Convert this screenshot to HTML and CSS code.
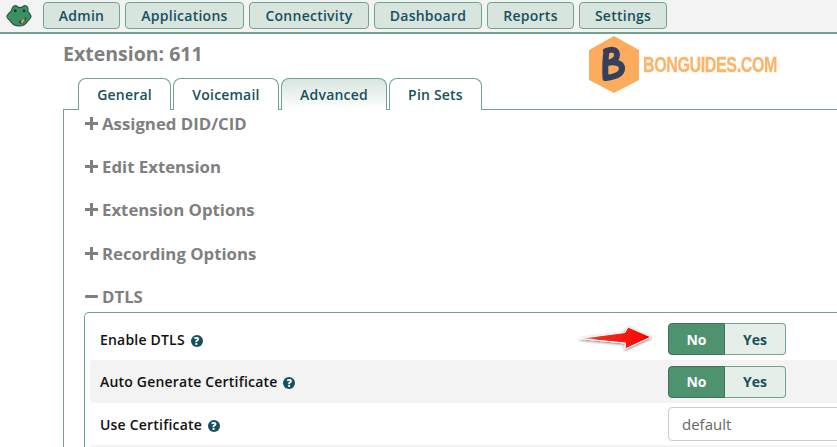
FILE: index.html
```html
<!DOCTYPE html>
<html lang="en">
<head>
<meta charset="utf-8">
<title>Extension: 611</title>
<link rel="stylesheet" href="styles.css">
</head>
<body>
<nav class="navbar">
  <svg class="frog" width="26" height="22" viewBox="0 1 28 21" preserveAspectRatio="none">
    <path d="M8 2.500c2-1.500 4.500-.8 5.500 1 1.300-.4 2.300-.4 3.500 0 1-1.800 3.500-2.500 5.500-1 1.300 1 1.500 3 .8 4.500 1.500 1.200 3 2.800 3.700 4.800-.6 2.200-2.300 3.700-4 5-2 2.700-5.500 4.200-8.800 4.200-3.700 0-7.300-1.600-9.200-4.400C3.200 15.400 1.500 14 .9 11.800 1.600 9.800 3.500 8.200 5.500 7 6.300 5.300 6.500 3.600 8 2.500z" fill="#3d9064" stroke="#1d5a50" stroke-width="1.200"/>
    <circle cx="10" cy="6.500" r="1.500" fill="#123c3c"/><circle cx="19.500" cy="6.500" r="1.500" fill="#123c3c"/>
    <path d="M14 16c3 .5 6-1 8-4-.2 4-3 7-6 7-1.200 0-1.800-1.500-2-3z" fill="#173f3f"/>
    <path d="M15.500 17l4-3 .8 1.500-3 3.500z" fill="#e6a23c"/>
  </svg>
  <a class="nav-btn nav-admin">Admin</a>
  <a class="nav-btn nav-apps">Applications</a>
  <a class="nav-btn nav-conn">Connectivity</a>
  <a class="nav-btn nav-dash">Dashboard</a>
  <a class="nav-btn nav-rep">Reports</a>
  <a class="nav-btn nav-set">Settings</a>
</nav>

<main class="page">
  <h1 class="title">Extension: 611</h1>
  <ul class="tabs">
    <li class="tab tab-general">General</li>
    <li class="tab tab-voicemail">Voicemail</li>
    <li class="tab tab-advanced">Advanced</li>
    <li class="tab tab-pins">Pin Sets</li>
  </ul>
  <section class="panel">
    <h2 class="sec"><span class="plus"></span>Assigned DID/CID</h2>
    <h2 class="sec"><span class="plus"></span>Edit Extension</h2>
    <h2 class="sec"><span class="plus"></span>Extension Options</h2>
    <h2 class="sec"><span class="plus"></span>Recording Options</h2>
    <h2 class="sec"><span class="minus"></span>DTLS</h2>
    <div class="box">
      <div class="row">
        <label class="lbl">Enable DTLS <span class="help">?</span></label>
        <div class="toggle"><span class="on">No</span><span class="off">Yes</span></div>
      </div>
      <div class="row row-alt">
        <label class="lbl">Auto Generate Certificate <span class="help">?</span></label>
        <div class="toggle"><span class="on">No</span><span class="off">Yes</span></div>
      </div>
      <div class="row">
        <label class="lbl">Use Certificate <span class="help">?</span></label>
        <div class="select">default</div>
      </div>
      <div class="row row-alt"></div>
    </div>
  </section>
</main>

<div class="watermark">
  <svg width="52" height="58" viewBox="0 0 52 58">
    <polygon points="26,0 51,14 51,44 26,57 1,44 1,14" fill="#fdab5c"/>
    <path d="M18.500 15c-1.200 8-1.500 17-1 27M18 15c6-2.500 11-1.500 11 4 0 4.500-5 7-10 8 7-1.500 15-.5 15 5.500 0 6-8 8.500-16 9.500" fill="none" stroke="#35405f" stroke-width="6" stroke-linecap="round" stroke-linejoin="round"/>
  </svg>
  <span class="wm-text">BONGUIDES.COM</span>
</div>

<svg class="arrow" width="78" height="30" viewBox="0 0 78 30">
  <defs>
    <linearGradient id="ag" x1="0" x2="1" y1="0" y2="0"><stop offset="0" stop-color="#f9c0b8"/><stop offset=".25" stop-color="#f03020"/><stop offset="1" stop-color="#ff0000"/></linearGradient>
    <filter id="as" x="-10%" y="-30%" width="120%" height="170%"><feDropShadow dx="0" dy="1" stdDeviation="1.500" flood-color="#000" flood-opacity=".55"/></filter>
  </defs>
  <polygon points="1,14.500 47,8.500 50,3 73,13 47,25 47.500,19" fill="url(#ag)" stroke="#fff" stroke-width="1" filter="url(#as)"/>
</svg>
</body>
</html>
```
FILE: styles.css
```css
* { box-sizing: border-box; }
html, body { margin: 0; padding: 0; height: 447px; overflow: hidden; background: #fff; }
body { font-family: "Open Sans", "Noto Sans", sans-serif; color: #111; position: relative; }

.navbar {
  display: flex; align-items: flex-start; height: 34px; padding: 2px 0 0 6px;
  background: #f3f3f3; border-bottom: 2px solid #6fa58b;
}
.frog { margin-top: 3px; margin-right: 11px; flex: none; }
.nav-btn {
  height: 27px; display: flex; align-items: center; justify-content: center;
  background: #d8e5df; border: 1px solid #6fa58b; border-radius: 4px;
  color: #17505a; font-size: 14px; font-weight: 600; letter-spacing: .25px; margin-right: 5px;
}
.nav-admin { width: 77px; }
.nav-apps { width: 119px; }
.nav-conn { width: 120px; }
.nav-dash { width: 108px; }
.nav-rep { width: 87px; }
.nav-set { width: 88px; }

.page { padding: 0 0 0 63px; height: 413px; overflow: hidden; }
.title { margin: 0; padding: 8px 0 0; height: 44px; font-size: 19.500px; line-height: 24px; font-weight: 700; color: #7f7f7f; }
.tabs { display: flex; list-style: none; margin: 0 0 0 15px; padding: 0; gap: 2px; height: 31px; }
.tab {
  height: 32px; display: flex; align-items: center; justify-content: center;
  border: 1px solid #6fa58b; border-bottom: 0; border-radius: 8px 8px 0 0;
  font-size: 14px; font-weight: 600; letter-spacing: .2px; color: #17505a; background: #fff; position: relative;
}
.tab-general { width: 93px; }
.tab-voicemail { width: 106px; }
.tab-advanced { width: 106px; background: linear-gradient(#d8e5df, #fff); z-index: 1; }
.tab-pins { width: 93px; }

.panel { border: 1px solid #6fa58b; border-right: 0; border-bottom: 0; padding: 0 0 0 21px; height: 340px; }
.sec { margin: 0; height: 43.200px; padding-top: 1px; display: flex; align-items: flex-start; font-size: 16.800px; line-height: 26px; font-weight: 700; color: #7f7f7f; }
.plus { width: 13px; height: 13px; margin: 6px 4px 0 0; flex: none; background: linear-gradient(#7f7f7f, #7f7f7f) center / 13px 3px no-repeat, linear-gradient(#7f7f7f, #7f7f7f) center / 3px 13px no-repeat; }
.minus { width: 13px; height: 3px; background: #7f7f7f; border-radius: 1px; margin: 11px 4px 0 0; flex: none; }

.box {
  margin: -14px 0 0 -1px; padding: 5px 0 0 5px; border: 1px solid #6fa58b; border-right: 0; border-bottom: 0;
  border-radius: 5px 0 0 0; height: 200px;
}
.row { display: flex; align-items: center; height: 42.500px; padding: 0 0 0 10px; border-radius: 4px 0 0 4px; }
.row-alt { background: #f3f3f3; }
.lbl { font-size: 14px; font-weight: 600; letter-spacing: .2px; color: #111; width: 568px; flex: none; }
.help {
  display: inline-flex; width: 12px; height: 12px; border-radius: 50%; align-items: center; justify-content: center;
  background: #17505a; color: #fff; font-size: 10px; font-weight: 800; line-height: 1; margin-left: 2px; vertical-align: 0;
}
.toggle { display: flex; width: 118px; height: 32px; font-size: 14px; font-weight: 700; flex: none; }
.toggle span { display: flex; align-items: center; justify-content: center; }
.on { width: 57px; background: #4e9270; color: #fff; border: 1px solid #3d7059; border-radius: 4px 0 0 4px; }
.off { width: 61px; background: #e6eeea; color: #17505a; border: 1px solid #6fa58b; border-left: 0; border-radius: 0 4px 4px 0; }
.select {
  flex: 1; height: 34px; margin-right: -20px; padding-left: 13px; display: flex; align-items: center;
  border: 1px solid #ccc; border-radius: 4px; font-size: 15px; color: #666;
}

.watermark { position: absolute; left: 588px; top: 36px; display: flex; align-items: center; gap: 3px; }
.wm-text { font-family: "Liberation Sans", sans-serif; font-weight: 700; font-size: 21.500px; color: #fdb468; -webkit-text-stroke: .3px #fdb468; transform: scaleX(.745); transform-origin: left center; white-space: nowrap; letter-spacing: -.5px; margin-top: 1px; }
.arrow { position: absolute; left: 578px; top: 324px; }
```
